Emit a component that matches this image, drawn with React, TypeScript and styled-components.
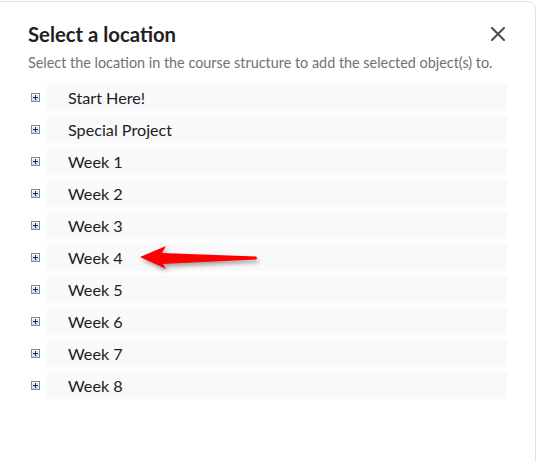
import React from "react";
import styled, { createGlobalStyle } from "styled-components";

const Global = createGlobalStyle`
  html, body { margin: 0; padding: 0; background: #ffffff; }
  body { font-family: Lato, "Open Sans", sans-serif; overflow: hidden; }
  * { box-sizing: border-box; }
`;

const Root = styled.div`
  position: relative;
  width: 538px;
  height: 462px;
  overflow: hidden;
`;

const Dialog = styled.div`
  margin: 1px 0 0 -8px;
  width: 544px;
  height: 480px;
  background: #ffffff;
  border: 1px solid #dfe1e4;
  border-radius: 8px;
  padding: 17px 28px 0 35px;
  display: flex;
  flex-direction: column;
`;

const Header = styled.div`
  display: flex;
  align-items: center;
  justify-content: space-between;
  height: 30px;
`;

const Title = styled.h1`
  margin: 0;
  font-size: 20.3px;
  font-weight: 700;
  line-height: 24px;
  color: #202122;
`;

const CloseButton = styled.button`
  border: 0;
  background: none;
  padding: 0;
  margin: 0 2px 0 0;
  width: 14px;
  height: 14px;
  display: flex;
  cursor: pointer;
  color: #494c4e;
`;

const Subtitle = styled.p`
  margin: 4px 0 0 0;
  font-size: 14.4px;
  line-height: 20px;
  color: #6e7376;
`;

const List = styled.ul`
  list-style: none;
  margin: 10px 0 0 0;
  padding: 0;
  display: flex;
  flex-direction: column;
  gap: 4px;
`;

const Item = styled.li`
  display: flex;
  align-items: center;
`;

const Toggle = styled.span`
  width: 9px;
  height: 9px;
  margin: 0 7px 0 3px;
  flex: none;
  display: flex;
`;

const Node = styled.div`
  flex: 1;
  height: 28px;
  background: #f9f9f9;
  display: flex;
  align-items: center;
  padding-left: 21px;
  font-size: 16.2px;
  color: #202122;
`;

const Arrow = styled.svg`
  position: absolute;
  left: 135px;
  top: 240px;
  overflow: visible;
`;

const items = [
  "Start Here!",
  "Special Project",
  "Week 1",
  "Week 2",
  "Week 3",
  "Week 4",
  "Week 5",
  "Week 6",
  "Week 7",
  "Week 8",
];

const PlusBox = () => (
  <svg width="9" height="9" viewBox="0 0 9 9">
    <defs>
      <linearGradient id="pb" x1="0" y1="0" x2="0" y2="1">
        <stop offset="0" stopColor="#ffffff" />
        <stop offset="1" stopColor="#c9d3e0" />
      </linearGradient>
    </defs>
    <rect x="0.5" y="0.5" width="8" height="8" fill="url(#pb)" stroke="#7a8ea8" />
    <path d="M2 4.5h5M4.5 2v5" stroke="#1f2c45" strokeWidth="1" />
  </svg>
);

export default function App() {
  return (
    <Root>
      <Global />
      <Dialog>
        <Header>
          <Title>Select a location</Title>
          <CloseButton aria-label="Close">
            <svg width="14" height="14" viewBox="0 0 14 14">
              <path d="M1 1L13 13M13 1L1 13" stroke="currentColor" strokeWidth="2" strokeLinecap="round" />
            </svg>
          </CloseButton>
        </Header>
        <Subtitle>Select the location in the course structure to add the selected object(s) to.</Subtitle>
        <List>
          {items.map((t) => (
            <Item key={t}>
              <Toggle>
                <PlusBox />
              </Toggle>
              <Node>{t}</Node>
            </Item>
          ))}
        </List>
      </Dialog>
      <Arrow width="130" height="36" viewBox="0 0 130 36">
        <defs>
          <filter id="sh" x="-20%" y="-50%" width="140%" height="200%">
            <feDropShadow dx="2" dy="3" stdDeviation="2" floodColor="#000" floodOpacity="0.35" />
          </filter>
        </defs>
        <path
          d="M5 17 L31 6 L27 13 L121 16.5 Q123 18 121 19.5 L28 24 L31 29 Z"
          fill="#ff0000"
          filter="url(#sh)"
        />
      </Arrow>
    </Root>
  );
}
